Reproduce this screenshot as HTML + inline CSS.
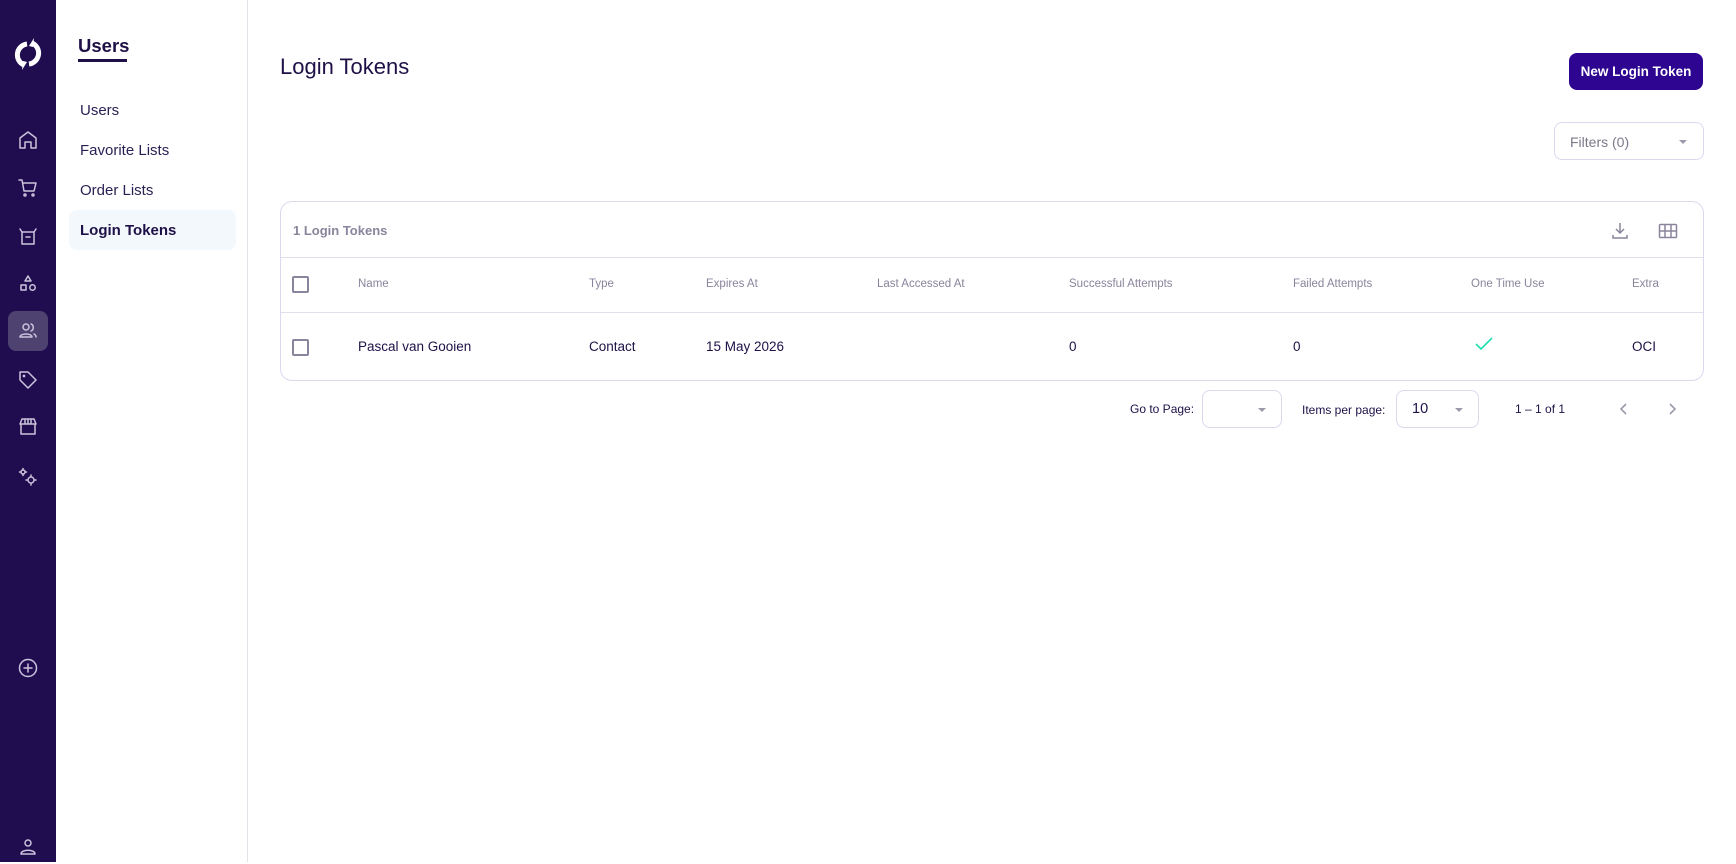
<!DOCTYPE html>
<html><head><meta charset="utf-8"><style>
*{box-sizing:border-box;margin:0;padding:0}
body{width:1736px;height:862px;overflow:hidden;background:#fff;font-family:"Liberation Sans",sans-serif;color:#1f1147;position:relative}
.side{position:absolute;left:0;top:0;width:56px;height:862px;background:#200d4f}
.ic{position:absolute;left:16px;width:24px;height:24px}
.ic svg{width:24px;height:24px;fill:none;stroke:#c9c3dc;stroke-width:1.5;stroke-linecap:round;stroke-linejoin:round}
.act{position:absolute;left:8px;top:311px;width:40px;height:40px;border-radius:8px;background:#4e4270}
.nav{position:absolute;left:56px;top:0;width:192px;height:862px;border-right:1px solid #e3e3ea}
.nav h2{position:absolute;left:22px;top:35px;font-size:18.5px;font-weight:bold;color:#1f1147}
.nav .ul{position:absolute;left:22px;top:59px;width:49px;height:3px;background:#1f1147}
.mi{position:absolute;left:24px;font-size:15px;color:#2a1f52}
.mact{position:absolute;left:13px;top:210px;width:167px;height:40px;border-radius:8px;background:#f3f8fd}
.abs{position:absolute}
.h{font-size:11.5px;color:#8a849c}
.c{font-size:13.5px;color:#1f1147}
.cb{position:absolute;left:292px;width:17px;height:17px;border:2px solid #8a849c;border-radius:2px}
.sel{position:absolute;border:1px solid #dcd8ee;border-radius:8px;height:38px}
.tri{position:absolute;width:0;height:0;border-left:4.5px solid transparent;border-right:4.5px solid transparent;border-top:4.5px solid #9d98ab}
</style></head><body>
<div class="side">
 <svg style="position:absolute;left:12px;top:37px" width="32" height="34" viewBox="0 0 32 34"><path d="M20 6 A11 11 0 0 1 17 27" fill="none" stroke="#fff" stroke-width="5"/><path d="M12 28 A11 11 0 0 1 15 7" fill="none" stroke="#fff" stroke-width="5"/><path d="M22 1 L17 9 L21 10 Z M10 33 L15 25 L11 24 Z" fill="#fff"/></svg>
 <div class="ic" style="top:128px"><svg viewBox="0 0 24 24"><path d="M4 10 L12 4 L20 10 V20 H15 V14 H9 V20 H4 Z"/></svg></div>
 <div class="ic" style="top:176px"><svg viewBox="0 0 24 24"><path d="M3 4 H6 L8 15 H18 L20 7 H7"/><circle cx="9" cy="19" r="1"/><circle cx="17" cy="19" r="1"/></svg></div>
 <div class="ic" style="top:224px"><svg viewBox="0 0 24 24"><path d="M4 5 L6 8 H18 L20 5 M6 8 V20 H18 V8 M10 13 H14"/></svg></div>
 <div class="ic" style="top:272px"><svg viewBox="0 0 24 24"><path d="M12 4 L15 9 H9 Z M5 13 H10 V18 H5 Z"/><circle cx="16.5" cy="15.5" r="2.7"/></svg></div>
 <div class="act"></div>
 <div class="ic" style="top:319px"><svg viewBox="0 0 24 24"><circle cx="10" cy="8" r="3"/><path d="M4 18 C4 14 16 14 16 18 Z M15 5 C18 6 18 11 15 12 M18 15 C20 16 20 18 20 18"/></svg></div>
 <div class="ic" style="top:368px"><svg viewBox="0 0 24 24"><path d="M4 4 H12 L20 12 L12 20 L4 12 Z"/><circle cx="8" cy="8" r=".6"/></svg></div>
 <div class="ic" style="top:415px"><svg viewBox="0 0 24 24"><path d="M4 9 L6 4 H18 L20 9 Z M9 4 V9 M12 4 V9 M15 4 V9 M5 9 V19 H19 V9"/></svg></div>
 <div class="ic" style="top:465px"><svg viewBox="0 0 24 24"><circle cx="7" cy="7" r="2"/><circle cx="15" cy="15" r="3"/><path d="M15 10 V11 M15 19 V20 M10 15 H11 M19 15 H20 M7 3.5 V4.5 M7 9.5 V10.5 M3.5 7 H4.5 M9.5 7 H10.5"/></svg></div>
 <div class="ic" style="top:656px"><svg viewBox="0 0 24 24"><circle cx="12" cy="12" r="8.5"/><path d="M12 8 V16 M8 12 H16"/></svg></div>
 <div class="ic" style="top:835px"><svg viewBox="0 0 24 24"><circle cx="12" cy="8" r="3"/><path d="M5 19 C5 14 19 14 19 19 Z"/></svg></div>
</div>
<div class="nav">
 <h2>Users</h2><div class="ul"></div>
 <div class="mi" style="top:102px">Users</div>
 <div class="mi" style="top:142px">Favorite Lists</div>
 <div class="mi" style="top:182px">Order Lists</div>
 <div class="mact"></div>
 <div class="mi" style="top:222px;font-weight:bold;color:#1f1147">Login Tokens</div>
</div>
<div class="abs" style="left:280px;top:54px;font-size:22px;color:#1f1147;font-weight:300">Login Tokens</div>
<div class="abs" style="left:1569px;top:53px;width:134px;height:37px;background:#2e0591;border-radius:8px;color:#fff;font-size:13.5px;font-weight:bold;line-height:37px;text-align:center">New Login Token</div>
<div class="sel" style="left:1554px;top:122px;width:150px"><span class="abs" style="left:15px;top:11px;font-size:14px;color:#7c788a">Filters (0)</span><div class="tri" style="left:124px;top:17px"></div></div>
<div class="abs" style="left:280px;top:201px;width:1424px;height:180px;border:1px solid #dcd8ee;border-radius:12px"></div>
<div class="abs" style="left:281px;top:257px;width:1422px;height:1px;background:#e1deef"></div>
<div class="abs" style="left:281px;top:312px;width:1422px;height:1px;background:#e1deef"></div>
<div class="abs" style="left:293px;top:223px;font-size:13px;font-weight:bold;color:#8a849c">1 Login Tokens</div>
<svg class="abs" style="left:1608px;top:219px" width="24" height="24" viewBox="0 0 24 24" fill="none" stroke="#8a849c" stroke-width="1.5"><path d="M12 4 V14 M8 10 L12 14 L16 10 M5 16 V19 H19 V16"/></svg>
<svg class="abs" style="left:1656px;top:219px" width="24" height="24" viewBox="0 0 24 24" fill="none" stroke="#8a849c" stroke-width="1.5"><rect x="3.5" y="5.5" width="17" height="13" rx="1"/><path d="M3.5 12 H20.5 M9 5.5 V18.5 M15 5.5 V18.5"/></svg>
<div class="cb" style="top:276px"></div>
<div class="abs h" style="left:358px;top:278px">Name</div>
<div class="abs h" style="left:589px;top:278px">Type</div>
<div class="abs h" style="left:706px;top:278px">Expires At</div>
<div class="abs h" style="left:877px;top:278px">Last Accessed At</div>
<div class="abs h" style="left:1069px;top:278px">Successful Attempts</div>
<div class="abs h" style="left:1293px;top:278px">Failed Attempts</div>
<div class="abs h" style="left:1471px;top:278px">One Time Use</div>
<div class="abs h" style="left:1632px;top:278px">Extra</div>
<div class="cb" style="top:339px"></div>
<div class="abs c" style="left:358px;top:339px">Pascal van Gooien</div>
<div class="abs c" style="left:589px;top:339px">Contact</div>
<div class="abs c" style="left:706px;top:339px">15 May 2026</div>
<div class="abs c" style="left:1069px;top:339px">0</div>
<div class="abs c" style="left:1293px;top:339px">0</div>
<svg class="abs" style="left:1475px;top:337px" width="18" height="14" viewBox="0 0 18 14" fill="none" stroke="#1de0b0" stroke-width="1.6"><path d="M1 7 L6 12 L17 1"/></svg>
<div class="abs c" style="left:1632px;top:339px">OCI</div>
<div class="abs" style="left:1130px;top:402px;font-size:12px;color:#1f1147">Go to Page:</div>
<div class="sel" style="left:1202px;top:390px;width:80px"><div class="tri" style="left:55px;top:17px"></div></div>
<div class="abs" style="left:1302px;top:403px;font-size:12px;color:#1f1147">Items per page:</div>
<div class="sel" style="left:1396px;top:390px;width:83px"><span class="abs" style="left:15px;top:10px;font-size:14.5px">10</span><div class="tri" style="left:58px;top:17px"></div></div>
<div class="abs" style="left:1515px;top:402px;font-size:12px;color:#1f1147">1 – 1 of 1</div>
<svg class="abs" style="left:1617px;top:401px" width="14" height="16" viewBox="0 0 14 16" fill="none" stroke="#9d98ab" stroke-width="1.6"><path d="M9 3 L4 8 L9 13"/></svg>
<svg class="abs" style="left:1665px;top:401px" width="14" height="16" viewBox="0 0 14 16" fill="none" stroke="#9d98ab" stroke-width="1.6"><path d="M5 3 L10 8 L5 13"/></svg>
</body></html>
